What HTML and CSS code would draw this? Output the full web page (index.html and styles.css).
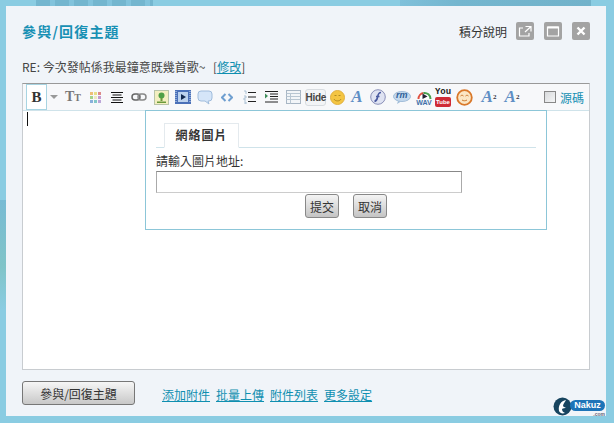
FILE: index.html
```html
<!DOCTYPE html>
<html lang="zh-Hant">
<head>
  <meta charset="UTF-8" />
  <title>參與/回復主題</title>
  <link rel="stylesheet" href="styles.css">
</head>
<body>
  <div class="marca"></div>
  <div class="franja"></div>
  <div class="lateral"></div>
  <div class="dialogo">
    <div class="cabecera">
      <h1>參與/回復主題</h1>
      <a class="ayuda">積分說明</a>
      <span class="ctrl"><svg width="18" height="18" viewBox="0 0 18 18"><path d="M7 6H3.500v8h9.500v-3M9.500 4.500h5.500v5M15 4.500l-6 5.500" fill="none" stroke="#fff" stroke-width="1.200"/></svg></span>
      <span class="ctrl"><svg width="18" height="18" viewBox="0 0 18 18"><path d="M3.500 5h11v9h-11z" fill="none" stroke="#fff" stroke-width="1.200"/><path d="M3.500 5.500h11" stroke="#fff" stroke-width="2"/></svg></span>
      <span class="ctrl"><svg width="18" height="18" viewBox="0 0 18 18"><path d="M5.500 5.500l7 7M12.500 5.500l-7 7" stroke="#fff" stroke-width="2.400"/></svg></span>
    </div>
    <p class="asunto">RE: 今次發帖係我最鐘意既幾首歌~ <span class="corchete">[<a>修改</a>]</span></p>

    <div class="editor">
      <div class="barra">
        <span class="btn-b">B</span>
        <span class="flecha"></span>
        <span class="ico tr">T<small>T</small></span>
        <span class="ico"><svg width="13" height="13" viewBox="0 0 13 13"><path d="M1 1h3v3H1z" fill="#eebf78"/><path d="M5 1h3v3H5z" fill="#e8df88"/><path d="M9 1h3v3H9z" fill="#dd8a8a"/><path d="M1 5h3v3H1z" fill="#a4d28a"/><path d="M5 5h3v3H5z" fill="#eee8c4"/><path d="M9 5h3v3H9z" fill="#c49ad0"/><path d="M1 9h3v3H1z" fill="#8ab0dc"/><path d="M5 9h3v3H5z" fill="#84c8c8"/><path d="M9 9h3v3H9z" fill="#bca6d8"/></svg></span>
        <span class="ico"><svg width="14" height="12" viewBox="0 0 14 12"><path d="M1 1.500h12M2.500 4h9M1 6.500h12M2.500 9h9M1 11.500h12" stroke="#111" stroke-width="1"/></svg></span>
        <span class="ico"><svg width="16" height="10" viewBox="0 0 16 10"><rect x="1" y="2" width="8" height="6" rx="3" fill="none" stroke="#666" stroke-width="1.500"/><rect x="7" y="2" width="8" height="6" rx="3" fill="none" stroke="#888" stroke-width="1.500"/></svg></span>
        <span class="ico"><svg width="15" height="15" viewBox="0 0 15 15"><rect x=".5" y=".5" width="14" height="14" fill="#f4efc0" stroke="#b8c4a8"/><circle cx="7.500" cy="5.500" r="3" fill="#4f9f45"/><path d="M6.500 8h2v3h-2zM3 11.500h9v1.500H3z" fill="#6a9a3a"/></svg></span>
        <span class="ico"><svg width="16" height="14" viewBox="0 0 16 14"><rect width="16" height="14" fill="#4a70b8"/><rect x="3" y="2" width="10" height="10" fill="#bcd2ee"/><path d="M6 4l5 3-5 3z" fill="#13294f"/><path d="M1 1v12M15 1v12" stroke="#cfe0f4" stroke-dasharray="1 1"/></svg></span>
        <span class="ico"><svg width="16" height="15" viewBox="0 0 16 15"><path d="M4 1h8a3 3 0 0 1 3 3v4a3 3 0 0 1-3 3h-1l1 3-4-3H4a3 3 0 0 1-3-3V4a3 3 0 0 1 3-3z" fill="#d5e5f8" stroke="#a0bcdc"/></svg></span>
        <span class="ico"><svg width="12" height="9" viewBox="0 0 12 9"><path d="M4.500 1L1 4.500 4.500 8M7.500 1L11 4.500 7.500 8" fill="none" stroke="#6f9fd0" stroke-width="2"/></svg></span>
        <span class="ico"><svg width="13" height="14" viewBox="0 0 13 14"><path d="M5 2.500h8M5 7h8M5 11.500h8" stroke="#222"/><path d="M1 1h2v3M1 6h2v2H1v2h2M1 12h2v2H1" fill="none" stroke="#9ab4cc" stroke-width=".8"/></svg></span>
        <span class="ico"><svg width="14" height="12" viewBox="0 0 14 12"><path d="M1 .5h13M6 3h8M6 5.500h8M6 8h8M1 11h13" stroke="#222"/><path d="M1 2.500l3 2.500-3 2.500z" fill="#3f8f5a"/></svg></span>
        <span class="ico"><svg width="15" height="14" viewBox="0 0 15 14"><rect x=".5" y=".5" width="14" height="13" fill="#f2f5f8" stroke="#a8b6c4"/><path d="M.5 3.500h14M.5 6.500h14M.5 9.500h14M4.500 3.500v10" stroke="#b8c6d2"/></svg></span>
        <span class="ico"><span class="hide">Hide</span></span>
        <span class="ico"><svg width="15" height="15" viewBox="0 0 15 15"><circle cx="7.500" cy="7.500" r="7" fill="#f4c542" stroke="#e0b040"/><path d="M4 9c1 2.500 6 2.500 7 0" fill="none" stroke="#b08a20"/><path d="M4.500 5.500h2M8.500 5.500h2" stroke="#b08a20"/></svg></span>
        <span class="ico let junto">A</span>
        <span class="ico"><svg width="16" height="16" viewBox="0 0 16 16"><circle cx="8" cy="8" r="7.300" fill="#dfe3f2" stroke="#8a90b8"/><path d="M11 3.500C8 3.500 8 6 7.500 8.500S6 12 4.500 12.500M6 7.500h3.500" fill="none" stroke="#4a5aa0" stroke-width="1.600"/></svg></span>
        <span class="ico rm"><svg width="18" height="13" viewBox="0 0 18 13"><ellipse cx="9" cy="5.500" rx="8.500" ry="5" fill="#c4d9ee" stroke="#a0bcd8"/><path d="M5 10l-1 3 4-2.500z" fill="#a0bcd8"/></svg><i>rm</i></span>
        <span class="ico wav"><svg width="15" height="10" viewBox="0 0 15 10"><path d="M1 10a6.500 6.500 0 0 1 13 0z" fill="#fff"/><path d="M1.500 10a6 6 0 0 1 5-6" fill="none" stroke="#e05040" stroke-width="2"/><path d="M6.500 4a6 6 0 0 1 7 6" fill="none" stroke="#4aa050" stroke-width="2"/><path d="M5.500 4.500l5 3-5 2.500z" fill="#223"/></svg><b>WAV</b></span>
        <span class="ico yt"><b>You</b><i>Tube</i></span>
        <span class="ico"><svg width="17" height="17" viewBox="0 0 17 17"><circle cx="8.500" cy="8.500" r="7.300" fill="#fbe6c4" stroke="#d9782a" stroke-width="1.800"/><path d="M4.500 7c1-1 2-1 3 0M9.500 7c1-1 2-1 3 0M6 11c1.500 1 3.500 1 5 0" fill="none" stroke="#c9772e"/></svg></span>
        <span class="ico let sup">A<sup>2</sup></span>
        <span class="ico let sub">A<sub>2</sub></span>
        <label class="fuente"><span class="check"></span>源碼</label>
      </div>
      <div class="area"><span class="cursor"></span></div>

      <div class="emergente">
        <div class="pestanas"><span class="pestana">網絡圖片</span></div>
        <div class="cuerpo">
          <div class="etiqueta">請輸入圖片地址:</div>
          <div class="campo"></div>
          <div class="acciones">
            <button class="boton">提交</button>
            <button class="boton">取消</button>
          </div>
        </div>
      </div>
    </div>

    <div class="pie">
      <button class="enviar">參與/回復主題</button>
      <nav class="enlaces">
        <a>添加附件</a>
        <a>批量上傳</a>
        <a>附件列表</a>
        <a>更多設定</a>
      </nav>
      <div class="logo">
        <svg width="19" height="19" viewBox="0 0 19 19"><circle cx="9.500" cy="9.500" r="9" fill="#17445f"/><path d="M13 3C8 4 5 8 6 14c1 2 3 3 6 2-2-1-3-2-3-4 1-1 3-1 4-1-1-1-3-1-3-2 0-2 2-4 3-6z" fill="#fff"/></svg>
        <div class="logo-texto"><span class="logo-nombre">Nakuz</span><span class="logo-com">.com</span></div>
      </div>
    </div>
  </div>
</body>
</html>
```

FILE: styles.css
```css
* { box-sizing: border-box; }
html, body { margin: 0; height: 423px; overflow: hidden; }
body { position: relative; background: #8accE2; padding: 6px 8px 7px 6px; font-family: "Noto Sans CJK TC", "Liberation Sans", sans-serif; font-size: 12px; color: #333; }
a { color: #0f8fb0; }

/* fondo detras del dialogo */
.marca { position: absolute; left: 36px; top: 0; width: 117px; height: 6px; background: repeating-linear-gradient(90deg, #74b6cf 0 14px, #82c3dc 14px 19px); }
.franja { position: absolute; left: 400px; top: 0; width: 191px; height: 6px; background: linear-gradient(90deg, #7fc0da, #74b6cf 30%, #72b2ca); }
.lateral { position: absolute; left: 0; top: 200px; width: 6px; height: 110px; background: linear-gradient(#78bbd4, #80c4c8 60%, #8accE2); }

.dialogo { position: relative; width: 600px; height: 410px; background: #f0f4f9; padding: 0 16px; }
.cabecera { display: flex; align-items: center; height: 50px; }
.cabecera h1 { margin: 0; flex: 1; font-size: 14px; font-weight: bold; letter-spacing: 1.200px; color: #1790b4; line-height: 50px; }
.ayuda { color: #333; margin-right: 9px; }
.ctrl { display: block; width: 18px; height: 18px; margin-right: 10px; background: #a3a3a3; border-radius: 2px; }
.ctrl:last-child { margin-right: 0; }
.ctrl svg { display: block; }
.asunto { margin: 0; height: 27px; line-height: 22px; color: #444; }
.asunto a { text-decoration: underline; }
.corchete { margin-left: 5px; }

.editor { position: relative; width: 568px; height: 287px; border: 1px solid #c8ccd0; border-top-color: #999; background: #fff; }
.barra { display: flex; align-items: center; height: 27px; padding-left: 3px; background: #f7f8fa; border-bottom: 1px solid #cfe3ea; }
.btn-b { width: 21px; height: 26px; border: 1px solid #a8d4e2; background: #fff; font: bold 15px/24px "Liberation Serif", serif; text-align: center; color: #333; }
.flecha { width: 0; height: 0; margin: 0 4px 0 3px; border: 4px solid transparent; border-top-color: #999; border-bottom: 0; }
.ico { display: flex; flex: none; align-items: center; justify-content: center; width: 22px; height: 26px; position: relative; }
.ico svg { display: block; }
.tr { font: bold 14px "Liberation Serif", serif; color: #777; align-items: baseline; line-height: 26px; }
.tr small { font-size: 10px; }
.hide { font: bold 10px/14px "Liberation Sans", sans-serif; color: #444; width: 21px; height: 17px; background: #f2f4f6; border: 1px solid #d8dce0; border-radius: 3px; text-align: center; letter-spacing: -.3px; padding-top: 1px; }
.let { font: bold italic 17px "Liberation Serif", serif; color: #5f8fc5; }
.junto { margin-left: -2px; margin-right: -1px; }
.let sup, .let sub { font-size: 7px; color: #334; line-height: 0; font-style: normal; }
.rm { width: 24px; margin-left: 1px; margin-right: -1px; }
.rm i { position: absolute; left: 6px; top: 6px; font: bold italic 9px "Liberation Sans", sans-serif; color: #2e5f98; }
.wav { flex-direction: column; }
.wav b { font: bold 7px/7px "Liberation Sans", sans-serif; color: #3e6fa8; }
.yt { flex-direction: column; margin-left: -3px; margin-right: -1px; }
.yt b { font: bold 9px/9px "Liberation Mono", monospace; color: #222; }
.yt i { font: bold 6px/10px "Liberation Sans", sans-serif; color: #fff; background: #cf2b35; border-radius: 2px; padding: 0 1px; }
.sup { margin-left: 3px; }
.sub { margin-left: 1px; }
.fuente { display: flex; align-items: center; gap: 4px; margin-left: auto; margin-right: 5px; color: #1790b4; }
.check { width: 12px; height: 12px; border: 1px solid #888; background: linear-gradient(135deg, #d8dadc, #f4f5f6); }

.area { height: 258px; padding: 1px 4px; }
.cursor { display: block; width: 1px; height: 14px; background: #111; }

.emergente { position: absolute; left: 122px; top: 26px; width: 402px; height: 120px; background: #fff; border: 1px solid #8cc6d8; padding: 12px 10px 0; }
.pestanas { display: flex; height: 25px; padding-left: 8px; border-bottom: 1px solid #cfe3ea; }
.pestana { width: 75px; height: 25px; background: #fff; border: 1px solid #e4eaee; border-bottom: 1px solid #fff; font-weight: bold; letter-spacing: 1px; line-height: 22px; text-align: center; color: #333; }
.etiqueta { height: 23px; line-height: 26px; color: #333; }
.campo { width: 306px; height: 22px; border: 1px solid #aaa; border-top-color: #888; border-bottom-color: #ccc; background: #fff; }
.acciones { display: flex; gap: 14px; padding: 1px 0 0 149px; }
.boton { width: 34px; height: 24px; padding: 0; border: 1px solid #888; border-radius: 3px; background: linear-gradient(#f4f4f4, #c4c4c4); font: 12px "Noto Sans CJK TC", sans-serif; color: #333; }

.pie { display: flex; align-items: center; height: 36px; padding-top: 10px; position: relative; }
.enviar { width: 113px; height: 24px; padding: 0; border: 1px solid #777; border-radius: 3px; background: linear-gradient(#f6f6f6, #c8c8c8); font: 12px "Noto Sans CJK TC", sans-serif; color: #333; }
.enlaces { display: flex; gap: 6px; margin-left: 27px; padding-top: 3px; }
.enlaces a { text-decoration: underline; }
.logo { position: absolute; right: -15px; top: 27px; display: flex; align-items: flex-start; }
.logo-texto { display: flex; flex-direction: column; align-items: flex-end; margin-left: -2px; }
.logo-nombre { width: 35px; font: bold 9px/11px "Liberation Sans", sans-serif; text-align: center; color: #fff; background: #1d74b8; border-radius: 6px; margin-top: 3px; }
.logo-com { font: bold 5px/6px "Liberation Sans", sans-serif; color: #667; }
```
